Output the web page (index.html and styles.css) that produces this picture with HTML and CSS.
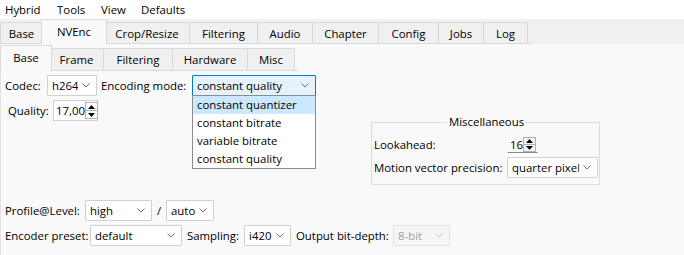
FILE: index.html
```html
<!DOCTYPE html>
<html>
<head>
<meta charset="utf-8">
<link rel="stylesheet" href="styles.css">
</head>
<body>
<div class="menubar">
  <span class="menu m-hybrid">Hybrid</span>
  <span class="menu m-tools">Tools</span>
  <span class="menu m-view">View</span>
  <span class="menu">Defaults</span>
</div>
<div class="tabbar">
  <div class="tabs main-tabs">
    <div class="tab">Base</div>
    <div class="tab selected">NVEnc</div>
    <div class="tab">Crop/Resize</div>
    <div class="tab">Filtering</div>
    <div class="tab">Audio</div>
    <div class="tab">Chapter</div>
    <div class="tab">Config</div>
    <div class="tab">Jobs</div>
    <div class="tab">Log</div>
  </div>
</div>
<div class="page">
  <div class="subtabbar">
    <div class="tabs sub-tabs">
      <div class="tab selected">Base</div>
      <div class="tab">Frame</div>
      <div class="tab">Filtering</div>
      <div class="tab">Hardware</div>
      <div class="tab">Misc</div>
    </div>
  </div>
  <div class="pane">
    <div class="row row1">
      <span class="lbl lbl-codec">Codec:</span>
      <div class="combo w-codec"><span class="val">h264</span><span class="chev"><svg width="8" height="5" viewBox="0 0 8 5"><path d="M0.5 0.5 L4 4 L7.5 0.5" fill="none" stroke="#707070" stroke-width="1"/></svg></span></div>
      <span class="lbl lbl-enc">Encoding mode:</span>
      <div class="combo focused w-enc"><span class="val">constant quality</span><span class="chev"><svg width="8" height="5" viewBox="0 0 8 5"><path d="M0.5 0.5 L4 4 L7.5 0.5" fill="none" stroke="#707070" stroke-width="1"/></svg></span>
        <div class="popup">
          <div class="item hl">constant quantizer</div>
          <div class="item">constant bitrate</div>
          <div class="item">variable bitrate</div>
          <div class="item">constant quality</div>
        </div>
      </div>
    </div>
    <div class="row row2">
      <span class="lbl lbl-quality">Quality:</span>
      <div class="spin w-quality"><span class="val">17,00</span>
        <span class="arrows">
          <span class="arr"><svg width="7" height="4" viewBox="0 0 7 4"><path d="M0 4 L3.5 0 L7 4 Z" fill="#000"/></svg></span>
          <span class="arr"><svg width="7" height="4" viewBox="0 0 7 4"><path d="M0 0 L3.5 4 L7 0 Z" fill="#000"/></svg></span>
        </span>
      </div>
    </div>
    <div class="misc">
      <div class="group-title">Miscellaneous</div>
      <div class="group-grid">
        <span class="lbl">Lookahead:</span>
        <div class="spin flat w-look"><span class="val">16</span>
          <span class="arrows">
            <span class="arr"><svg width="7" height="4" viewBox="0 0 7 4"><path d="M0 4 L3.5 0 L7 4 Z" fill="#000"/></svg></span>
            <span class="arr"><svg width="7" height="4" viewBox="0 0 7 4"><path d="M0 0 L3.5 4 L7 0 Z" fill="#000"/></svg></span>
          </span>
        </div>
        <span class="lbl">Motion vector precision:</span>
        <div class="combo w-mv"><span class="val">quarter pixel</span><span class="chev"><svg width="8" height="5" viewBox="0 0 8 5"><path d="M0.5 0.5 L4 4 L7.5 0.5" fill="none" stroke="#707070" stroke-width="1"/></svg></span></div>
      </div>
    </div>
    <div class="row row-profile">
      <span class="lbl lbl-profile">Profile@Level:</span>
      <div class="combo w-high"><span class="val">high</span><span class="chev"><svg width="8" height="5" viewBox="0 0 8 5"><path d="M0.5 0.5 L4 4 L7.5 0.5" fill="none" stroke="#707070" stroke-width="1"/></svg></span></div>
      <span class="lbl lbl-slash">/</span>
      <div class="combo w-auto"><span class="val">auto</span><span class="chev"><svg width="8" height="5" viewBox="0 0 8 5"><path d="M0.5 0.5 L4 4 L7.5 0.5" fill="none" stroke="#707070" stroke-width="1"/></svg></span></div>
    </div>
    <div class="row row-preset">
      <span class="lbl lbl-preset">Encoder preset:</span>
      <div class="combo w-preset"><span class="val">default</span><span class="chev"><svg width="8" height="5" viewBox="0 0 8 5"><path d="M0.5 0.5 L4 4 L7.5 0.5" fill="none" stroke="#707070" stroke-width="1"/></svg></span></div>
      <span class="lbl lbl-sampling">Sampling:</span>
      <div class="combo w-sampling"><span class="val">i420</span><span class="chev"><svg width="8" height="5" viewBox="0 0 8 5"><path d="M0.5 0.5 L4 4 L7.5 0.5" fill="none" stroke="#707070" stroke-width="1"/></svg></span></div>
      <span class="lbl lbl-depth">Output bit-depth:</span>
      <div class="combo disabled w-depth"><span class="val">8-bit</span><span class="chev"><svg width="8" height="5" viewBox="0 0 8 5"><path d="M0.5 0.5 L4 4 L7.5 0.5" fill="none" stroke="#c8c8c8" stroke-width="1"/></svg></span></div>
    </div>
  </div>
</div>
</body>
</html>
```

FILE: styles.css
```css
* { box-sizing: border-box; }
html, body { margin: 0; padding: 0; }
body {
  width: 684px;
  height: 255px;
  overflow: hidden;
  background: #f9f9f9;
  font-family: "Open Sans", "Noto Sans", "DejaVu Sans", sans-serif;
  font-size: 11.4px;
  color: #000;
}
.menubar {
  height: 19px;
  background: #fff;
  display: flex;
  align-items: center;
  padding-left: 5px;
}
.menu { line-height: 19px; white-space: nowrap; }
.m-hybrid { width: 52px; }
.m-tools { width: 44px; }
.m-view { width: 40px; }
.tabbar {
  height: 25px;
  background: #f0f0f0;
  display: flex;
  align-items: flex-end;
}
.tabs { display: grid; align-items: end; position: relative; }
.tabs::after {
  content: "";
  position: absolute;
  left: 0; right: -3px; bottom: 0;
  height: 1px;
  background: #d9d9d9;
}
.main-tabs { grid-template-columns: 43px 62px 85px 68px 55px 66px 60px 45px 44px; height: 25px; }
.sub-tabs { grid-template-columns: 50px 54px 69px 75px 47px; height: 26px; }
.tab {
  height: 21px;
  margin-bottom: 1px;
  background: #f0f0f0;
  border: 1px solid #d9d9d9;
  border-bottom: none;
  margin-left: -1px;
  display: flex;
  align-items: center;
  justify-content: center;
  white-space: nowrap;
}
.tab:first-child { margin-left: 0; }
.tab.selected {
  height: 25px;
  margin: 0 -2px 0 -2px;
  background: #f9f9f9;
  position: relative;
  z-index: 2;
  padding-bottom: 2px;
}
.tab.selected:first-child { margin-left: 0; }
.sub-tabs .tab { height: 22px; }
.sub-tabs .tab.selected { height: 26px; }
.page { background: #f9f9f9; }
.subtabbar { height: 27px; display: flex; align-items: flex-end; }
.pane { padding: 4px 0 0 0; border-left: 1px solid #e4e4e4; height: 184px; }
.row { display: flex; align-items: center; height: 21px; white-space: nowrap; }
.lbl { display: inline-block; white-space: nowrap; }
.row1 { padding-left: 4px; }
.lbl-codec { width: 42px; }
.lbl-enc { width: 95px; padding-left: 4px; }
.combo {
  position: relative;
  height: 21px;
  background: #fff;
  border: 1px solid #d0d0d0;
  border-radius: 1px;
  display: flex;
  align-items: center;
  padding-left: 4px;
  white-space: nowrap;
}
.combo .val { flex: 1; white-space: nowrap; overflow: hidden; }
.combo .chev { width: 16px; flex: none; display: flex; align-items: center; justify-content: center; margin-right: 2px; }
.combo .chev svg { display: block; }
.w-codec { width: 50px; }
.w-enc { width: 124px; }
.combo.focused { background: #e5f1fb; border-color: #0078d7; }
.popup {
  position: absolute;
  left: -1px;
  top: 19px;
  width: 124px;
  background: #fff;
  border: 1px solid #8c8c8c;
  z-index: 5;
}
.item { height: 18px; line-height: 18px; padding-left: 4px; }
.item.hl { background: #cce8ff; }
.row2 { margin-top: 4px; padding-left: 7px; }
.lbl-quality { width: 45px; }
.spin {
  height: 21px;
  background: #fff;
  border: 1px solid #d0d0d0;
  display: flex;
  align-items: center;
  padding-left: 2px;
}
.spin .val { flex: 1; }
.arrows {
  display: flex;
  flex-direction: column;
  border: 1px solid #b0b0b0;
  margin-right: 1px;
  height: 17px;
}
.arr { width: 11px; height: 8px; display: flex; align-items: center; justify-content: center; }
.arr + .arr { border-top: 1px solid #b0b0b0; }
.arr svg { display: block; }
.w-quality { width: 45px; }
.misc {
  margin: 1px 0 0 370px;
  width: 229px;
  height: 63px;
  border: 1px solid #dcdcdc;
  position: relative;
}
.group-title {
  position: absolute;
  top: -9px;
  left: 75px;
  padding: 0 2px;
  background: #f9f9f9;
  line-height: 16px;
}
.group-grid {
  display: grid;
  grid-template-columns: 133px 91px;
  row-gap: 4px;
  padding: 13px 0 0 2px;
  align-items: center;
}
.spin.flat { border-color: #f9f9f9; border-bottom-color: #8a8a8a; background: #f9f9f9; width: 31px; height: 17px; }
.spin.flat .arrows { height: 15px; }
.spin.flat .arr { height: 7px; }
.w-mv { width: 91px; }
.row-profile { margin-top: 15px; padding-left: 4px; }
.lbl-profile { width: 80px; }
.w-high { width: 67px; }
.lbl-slash { width: 14px; text-align: center; }
.w-auto { width: 48px; }
.row-preset { margin-top: 4px; padding-left: 4px; }
.lbl-preset { width: 85px; }
.w-preset { width: 92px; }
.lbl-sampling { width: 62px; padding-left: 5px; }
.w-sampling { width: 47px; }
.lbl-depth { width: 102px; padding-left: 5px; }
.w-depth { width: 57px; }
.combo.disabled { background: #f5f5f5; border-color: #e3e3e3; color: #a0a0a0; }
```
